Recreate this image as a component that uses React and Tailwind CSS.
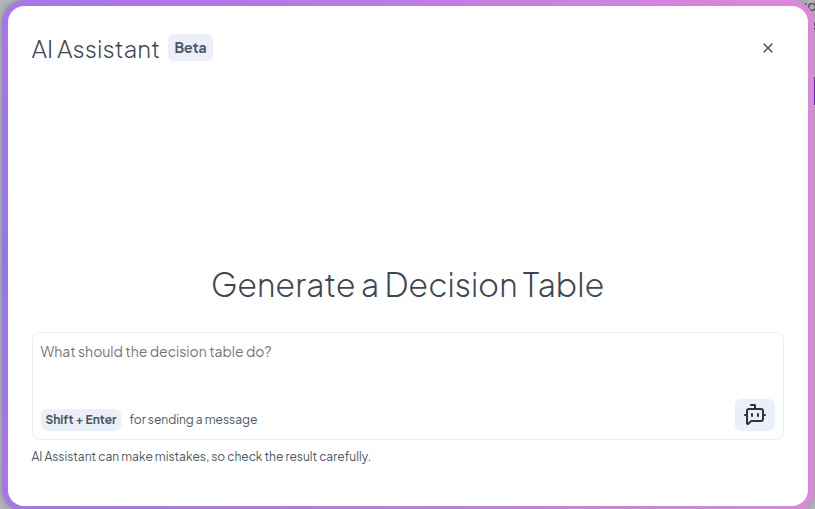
import React from "react";
import { BotMessageSquare, X } from "lucide-react";

export default function App() {
  return (
    <div className="relative h-[509px] w-[815px] overflow-hidden bg-[#b4b8bc] font-['Plus_Jakarta_Sans',Inter,sans-serif] text-[#3b4754]">
      <div className="absolute -right-[2px] -top-[6px] text-[15px] text-[#3b4754]">ud</div>
      <div className="absolute -right-[5px] top-[14px] text-[14px] text-[#3b4754]">s</div>
      <div className="absolute right-0 top-[77px] h-[28px] w-[4px] bg-[#6b35b5]" />
      <main className="relative ml-[2px] h-[512px] w-[812px] rounded-[22px] bg-[radial-gradient(circle_at_0%_50%,#9377ea_0px,#a876e8_255px,#da88da_810px)] p-[6px] shadow-[0_0_10px_rgba(0,0,0,0.25)]">
        <section className="flex h-[500px] flex-col rounded-[16px] bg-white px-6">
          <header className="flex h-[84px] items-center">
            <h1 className="-ml-[0.5px] w-[128.5px] whitespace-nowrap text-[24px] font-light leading-8">AI Assistant</h1>
            <span className="mb-px ml-2 flex h-[27px] w-[45px] items-center justify-center rounded-[6px] bg-[#ebeff7] text-[14px] font-bold text-[#4a5766]">Beta</span>
            <button className="ml-auto mr-2 flex size-4 items-center justify-center">
              <X size={16} strokeWidth={2} />
            </button>
          </header>
          <h2 className="mt-[170px] whitespace-nowrap pr-px text-center text-[32px] font-light leading-[48px]">Generate a Decision Table</h2>
          <div className="mt-[24px] flex h-[108px] shrink-0 flex-col rounded-[8px] border border-[#ebeef6] px-[7.5px] pb-2 pt-2">
            <p className="text-[14px] leading-[21px] text-[#757575]">What should the decision table do?</p>
            <div className="mt-auto flex items-end">
              <kbd className="ml-[0.5px] flex h-[22px] w-[80px] items-center justify-center whitespace-nowrap rounded-[6px] bg-[#ebeff7] font-['Plus_Jakarta_Sans',Inter,sans-serif] text-[12px] font-bold text-[#4a5766]">Shift + Enter</kbd>
              <span className="ml-[8.5px] text-[12px] leading-[22px] text-[#4a5766]">for sending a message</span>
              <button className="ml-auto mr-[0.5px] flex h-8 w-10 items-center justify-center rounded-[6px] bg-[#ebeff7] text-[#293541]">
                <BotMessageSquare size={24} />
              </button>
            </div>
          </div>
          <p className="-ml-[0.5px] mt-2 text-[12px] leading-[18px] text-[#4a5766]">AI Assistant can make mistakes, so check the result carefully.</p>
        </section>
      </main>
    </div>
  );
}
